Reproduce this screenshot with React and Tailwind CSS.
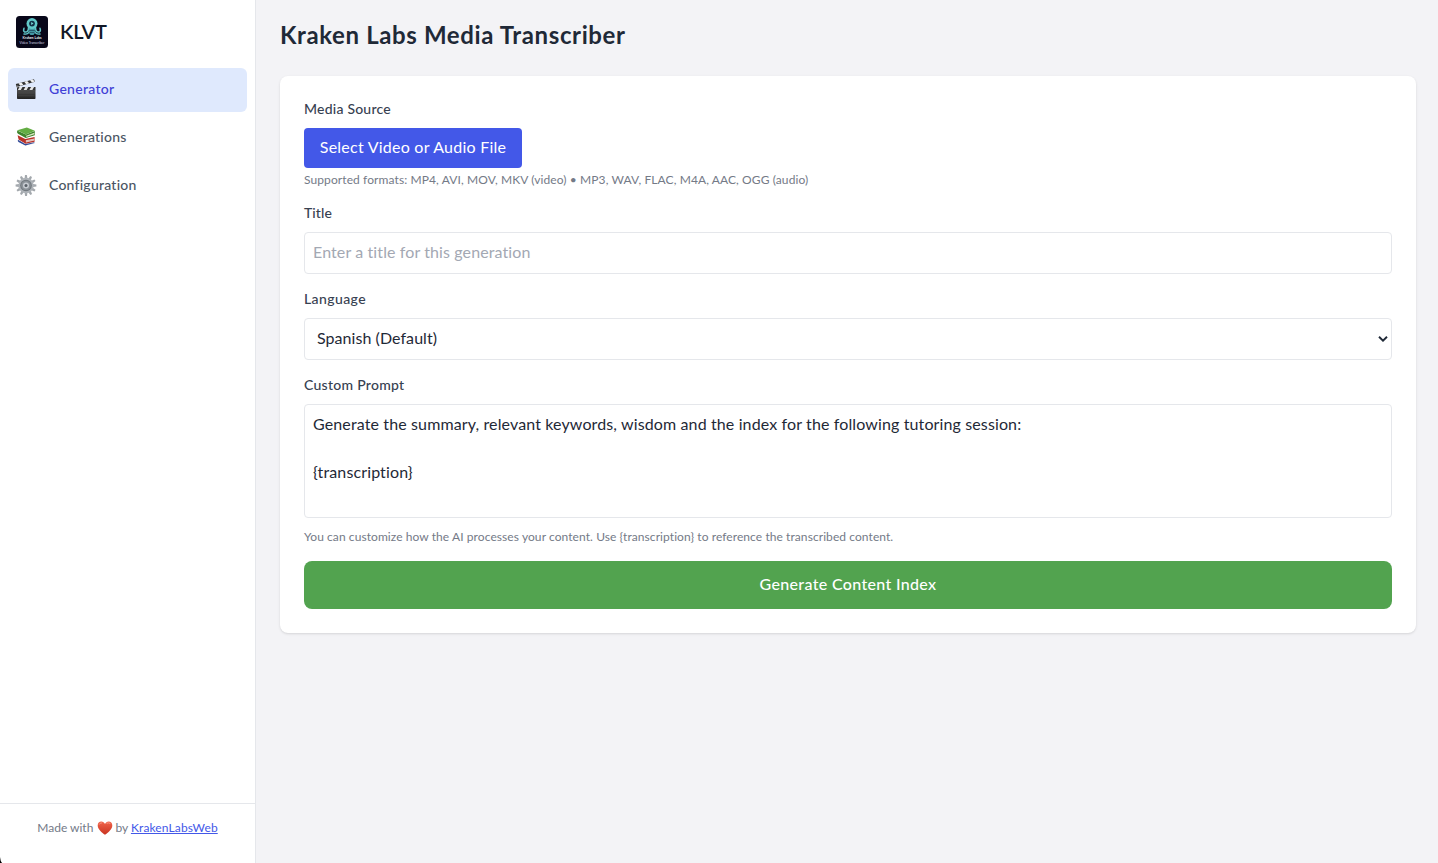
import React from "react";

function KrakenLogo() {
  return (
    <svg viewBox="0 0 32 32" className="h-8 w-8 shrink-0">
      <rect width="32" height="32" rx="3.500" fill="#080719" />
      <g fill="none" stroke="#5fc3c6" strokeLinecap="round">
        <path d="M12.500 11.500C12.500 15 11 16.500 8.500 16Q7 15 8 12.300" strokeWidth="1.500" />
        <path d="M19.500 11.500C19.500 15 21 16.500 23.500 16Q25 15 24 12.300" strokeWidth="1.500" />
        <path d="M13.500 13.500C13.500 17.500 11 18.500 8 18" strokeWidth="1.400" />
        <path d="M18.500 13.500C18.500 17.500 21 18.500 24 18" strokeWidth="1.400" />
      </g>
      <path d="M13 11h6v6l-1.500 2h-3L13 17z" fill="#4398a4" />
      <path d="M13.200 14.500h5.600M13.700 16.500h4.600" stroke="#16364a" strokeWidth=".6" />
      <circle cx="16" cy="7.600" r="5.500" fill="#62c9ca" />
      <circle cx="16" cy="7.600" r="2.900" fill="#123047" />
      <path d="M15.200 6.100l2.300 1.500-2.300 1.500z" fill="#78dddb" />
      <text x="16" y="22.700" textAnchor="middle" fontSize="3.500" fontWeight="700" fill="#e8eef5" fontFamily="Lato, sans-serif" textLength="19">Kraken Labs</text>
      <text x="16" y="27.800" textAnchor="middle" fontSize="3.200" fill="#d7dce6" fontFamily="Lato, sans-serif" textLength="25">Video Transcriber</text>
    </svg>
  );
}

function ClapperIcon() {
  return (
    <svg viewBox="0 0 22 22" className="h-[22px] w-[22px] shrink-0">
      <defs>
        <linearGradient id="slate" x1="0" y1="0" x2="0" y2="1">
          <stop offset="0" stopColor="#4c4c4c" />
          <stop offset="1" stopColor="#222" />
        </linearGradient>
      </defs>
      <g transform="translate(0 -.5)">
        <path d="M.8 5.500L19 .7l.9 2.500L1.700 8.400z" fill="#333" />
        <path d="M3.400 4.900l3-.9 2 2.300-3 1zM9.200 3.300l3-.8 2 2.300-3 .9zM15 1.800l2.800-.8 2 2.100-2.800.8z" fill="#f2f2f2" />
        <path d="M2 8.500h18.500v3.200H2z" fill="#303030" />
        <path d="M4.500 8.500h3l-1.700 3H2.900zM10.300 8.500h3l-1.700 3h-3zM16.100 8.500h3l-1.700 3h-3z" fill="#e4e4e4" />
        <path d="M2 11.500h18.500v8.300q0 .7-.7.700H2.700q-.7 0-.7-.7z" fill="url(#slate)" />
        <path d="M3 14.500h16.500M3 17.300h16.500" stroke="#585858" strokeWidth=".4" />
        <circle cx="2.500" cy="8.200" r="1.100" fill="#888" />
      </g>
    </svg>
  );
}

function BooksIcon() {
  return (
    <svg viewBox="0 0 22 22" className="h-[22px] w-[22px] shrink-0">
      <g transform="translate(.3 -1)">
        <path d="M3.500 14.500l7 4 9-2.300v1.300l-9.200 2-6.600-3.500z" fill="#dfe3ea" />
        <path d="M2.700 13.700l7.300 4.300 9-1.800v.9l-9 2.300-6.800-3.300q-1.200-1-.5-2.400z" fill="#324b98" />
        <path d="M2.300 9.200L10 13l9.300-2v4.700l-9 2-7-4.200z" fill="#b93228" />
        <path d="M10.600 14.200l8.500-1.800v2.100l-8.500 1.900z" fill="#e9cdc8" />
        <path d="M10.600 15.400l8.500-1.900" stroke="#c9aaa6" strokeWidth=".4" />
        <path d="M1.900 4.400L10.500 8.500 19.500 5v4.200l-9.100 2.900-7.700-4.300q-1.500-1.300-.8-3.400z" fill="#3f862d" />
        <path d="M10.900 9.700l8.200-2.900v1.500l-8.200 2.700z" fill="#dfe6c8" />
        <path d="M1.900 4.200L11.500 1.600l8.100 3.200-9.100 3.600z" fill="#63ad43" />
      </g>
    </svg>
  );
}

const teeth = [0, 30, 60, 90, 120, 150, 180, 210, 240, 270, 300, 330];

function GearIcon() {
  return (
    <svg viewBox="0 0 22 22" className="h-[22px] w-[22px] shrink-0">
      <g transform="translate(0 -.5)">
        {teeth.map((a) => (
          <path key={a} d="M9.600 4L10 .6h1.900l.5 3.400z" fill="#a3a8ad" transform={`rotate(${a} 11 11)`} />
        ))}
        <circle cx="11" cy="11" r="7.700" fill="#aeb3b8" />
        <circle cx="11" cy="11" r="5.800" fill="#70777d" />
        <circle cx="11" cy="11" r="4.800" fill="#8b9298" />
        <circle cx="11" cy="11" r="3" fill="#c8cdd2" />
        <circle cx="11" cy="11" r="1.500" fill="#596068" />
      </g>
    </svg>
  );
}

function Heart() {
  return (
    <svg viewBox="0 0 16 14" className="mr-[2px] ml-1 inline-block h-[14px] w-[16px] align-[-3px]">
      <defs>
        <linearGradient id="heart" x1="0" y1="0" x2="0" y2="1">
          <stop offset="0" stopColor="#f0634a" />
          <stop offset="1" stopColor="#c93320" />
        </linearGradient>
      </defs>
      <path d="M8 13.700C5 11.500.7 8.300.7 4.400.7 2 2.300.6 4.300.6 6 .6 7.300 1.600 8 3 8.700 1.600 10 .6 11.700.6c2 0 3.600 1.400 3.600 3.800 0 3.900-4.300 7.100-7.300 9.300z" fill="url(#heart)" />
      <path d="M2.200 3.300Q3 1.600 4.800 1.800M10 2.200Q11.500 1.300 13 2.300" stroke="#f8a392" strokeWidth=".8" fill="none" strokeLinecap="round" />
    </svg>
  );
}

const items = [
  { label: "Generator", Icon: ClapperIcon, box: "bg-[#dfe9fd] text-[#4040d6]", text: "tracking-[0.28px]" },
  { label: "Generations", Icon: BooksIcon, box: "text-[#4b5563]", text: "tracking-[0.22px]" },
  { label: "Configuration", Icon: GearIcon, box: "text-[#4b5563]", text: "tracking-[0.23px]" },
];

const labelClass = "block h-5 text-sm leading-[18px] font-medium text-[#374151]";
const fieldClass = "mt-2 block w-full rounded-sm border border-[#e5e7eb] bg-white text-base text-[#1f2937] outline-none";

export default function App() {
  return (
    <div className="relative flex h-[863px] bg-[#f3f3f6] font-[Lato,sans-serif] text-[#111827]">
      <aside className="flex w-64 shrink-0 flex-col border-r border-[#e5e7eb] bg-white">
        <div className="flex h-16 items-center gap-3 px-4">
          <KrakenLogo />
          <span className="pb-[3px] text-xl font-semibold tracking-[-0.3px]">KLVT</span>
        </div>
        <nav className="flex flex-1 flex-col gap-1 px-2 pt-1">
          {items.map(({ label, Icon, box, text }) => (
            <a key={label} className={`flex h-11 items-center gap-3 rounded-md px-[7px] text-sm font-medium ${box}`}>
              <Icon />
              <span className={`pb-0.5 ${text}`}>{label}</span>
            </a>
          ))}
        </nav>
        <div className="h-[60px] border-t border-[#e5e7eb] pt-4 text-center text-xs text-[#747a87]">
          Made with<Heart />by <a className="tracking-[0.13px] text-[#4358e8] underline">KrakenLabsWeb</a>
        </div>
      </aside>
      <main className="flex-1 pt-5 pr-[22px] pl-6">
        <h1 className="h-8 text-2xl leading-[30px] font-bold tracking-[0.62px] text-[#1f2937]">Kraken Labs Media Transcriber</h1>
        <form className="mt-6 h-[557px] rounded-lg bg-white p-6 shadow">
          <label className={`${labelClass} tracking-[0.22px]`}>Media Source</label>
          <button type="button" className="mt-2 block h-10 w-[218px] rounded-sm bg-[#4358e8] pb-0.5 tracking-[0.24px] text-white">
            Select Video or Audio File
          </button>
          <p className="mt-1 text-xs tracking-[0.1px] text-[#747a87]">
            Supported formats: MP4, AVI, MOV, MKV (video) • MP3, WAV, FLAC, M4A, AAC, OGG (audio)
          </p>

          <label className={`${labelClass} mt-4 tracking-[0.1px]`}>Title</label>
          <input
            placeholder="Enter a title for this generation"
            className={`${fieldClass} h-[42px] px-2 pb-[3px] tracking-[0.11px] placeholder:text-[#a3a8b3]`}
          />

          <label className={`${labelClass} mt-4 tracking-[0.4px]`}>Language</label>
          <div className={`${fieldClass} flex h-[42px] items-center justify-between pr-[3px] pl-3`}>
            <span className="pb-0.5 tracking-[0.06px]">Spanish (Default)</span>
            <svg viewBox="0 0 10 6" className="h-[6px] w-[10px]">
              <path d="M1 .8l4 3.900L9 .8" fill="none" stroke="#1f2937" strokeWidth="1.900" />
            </svg>
          </div>

          <label className={`${labelClass} mt-4 tracking-[0.28px]`}>Custom Prompt</label>
          <textarea
            className={`${fieldClass} h-[114px] resize-none px-2 pt-[7px] tracking-[0.125px]`}
            defaultValue={"Generate the summary, relevant keywords, wisdom and the index for the following tutoring session:\n\n{transcription}"}
          />
          <p className="mt-[11px] text-xs tracking-[0.077px] text-[#747a87]">
            You can customize how the AI processes your content. Use {"{transcription}"} to reference the transcribed content.
          </p>
          <button type="button" className="mt-4 block h-12 w-full rounded-lg bg-[#52a34f] pb-0.5 font-medium tracking-[0.34px] text-white">
            Generate Content Index
          </button>
        </form>
      </main>
      <svg viewBox="0 0 2 6" className="absolute bottom-0 left-0 h-[6px] w-[2px]">
        <path d="M0 0Q.3 4 2 6H0z" fill="#000" />
      </svg>
    </div>
  );
}
